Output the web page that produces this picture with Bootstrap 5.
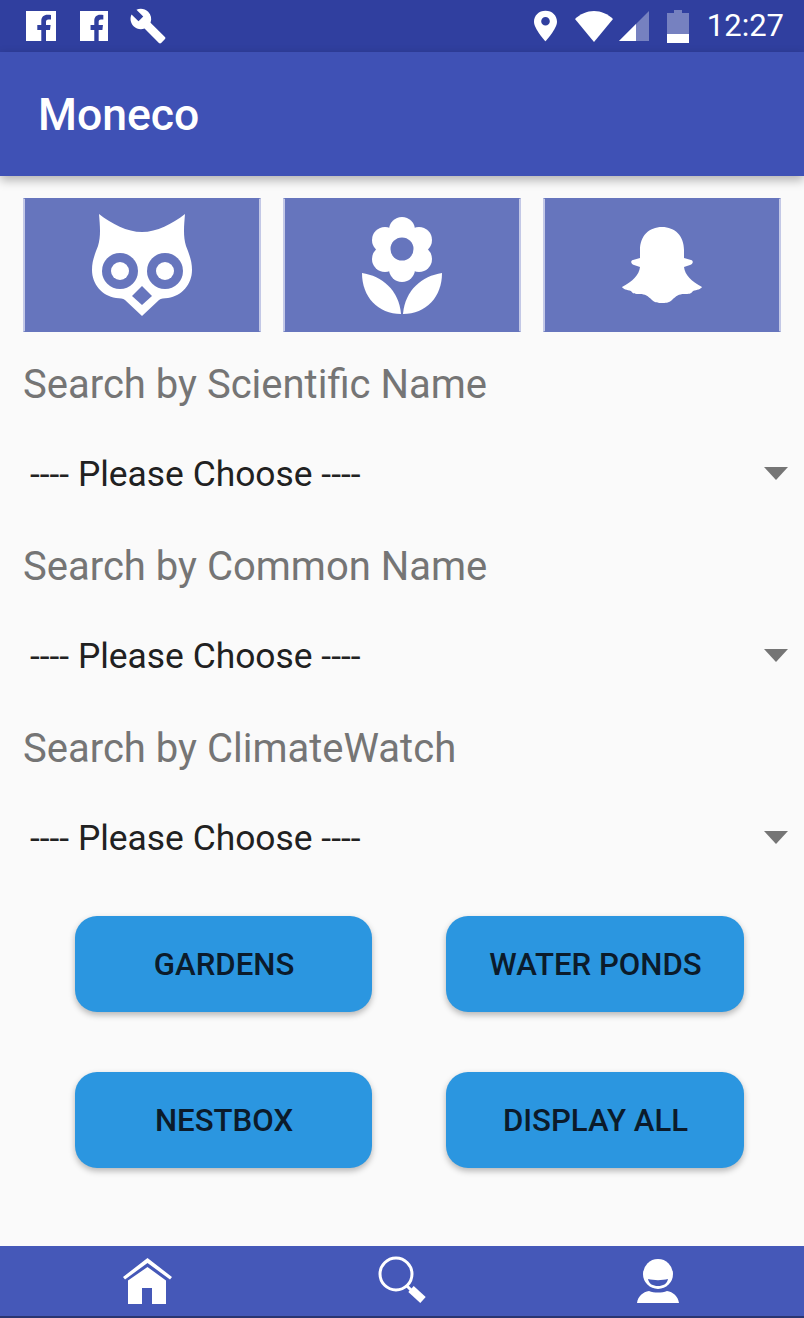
<!DOCTYPE html>
<html lang="en">
<head>
  <meta charset="UTF-8">
  <meta name="viewport" content="width=device-width, initial-scale=1">
  <title>Moneco</title>
  <link href="https://cdn.jsdelivr.net/npm/bootstrap@5.3.2/dist/css/bootstrap.min.css" rel="stylesheet">
  <style>
    html, body { height: 100%; }
    body {
      background: #fafafa;
      font-family: Roboto, "Liberation Sans", sans-serif;
      overflow: hidden;
    }
    .status-strip { height: 52px; background: #303f9f; color: #fff; padding: 0 20px 0 26px; }
    .status-time { font-size: 31px; line-height: 50px; margin-left: 18px; }
    .gap-left-6 { margin-left: 6px; }
    .gap-left-18 { margin-left: 18px; }
    .gap-left-21 { margin-left: 21px; }
    .gap-left-24 { margin-left: 24px; }
    .app-head {
      height: 124px;
      background: #3f51b5;
      padding: 3px 0 0 38px;
      box-shadow: 0 4px 10px rgba(0,0,0,.3);
      position: relative;
    }
    .app-title { color: #fff; font-size: 44.5px; font-weight: 500; margin: 0; line-height: 1; }
    .tile-row { padding: 22px 23px 24px; }
    .tile {
      width: 238px;
      height: 134px;
      background: #6675bd;
      border-left: 2px solid #c3c8e6;
      border-right: 2px solid #c3c8e6;
      border-radius: 0;
    }
    .field-block { margin-bottom: 20px; }
    .field-label { color: #757575; font-size: 40px; line-height: 56px; padding: 1px 0 0 23px; margin: 0 0 15px; display: block; }
    .field-select.form-select {
      height: 90px;
      padding: 3px 0 0 30px;
      border: 0;
      border-radius: 0;
      background-color: transparent;
      background-image: url("data:image/svg+xml,%3Csvg xmlns='http://www.w3.org/2000/svg' width='24' height='13'%3E%3Cpath d='M0 0h24L12 13z' fill='%23757575'/%3E%3C/svg%3E");
      background-position: right 16px center;
      background-size: 24px 13px;
      color: #212121;
      font-size: 35.4px;
      box-shadow: none;
    }
    .btn-grid { padding: 14px 60px 0 75px; display: grid; grid-template-columns: 297px 298px; column-gap: 74px; row-gap: 60px; }
    .btn-grid .btn {
      height: 96px;
      background: #2b96e0;
      border: 0;
      border-radius: 22px;
      color: #0b1b2b;
      font-size: 31.2px;
      font-weight: 500;
      padding: 2px 0 0 1px;
      box-shadow: 0 3px 6px rgba(0,0,0,.28);
    }
    .bottom-bar { height: 72px; background: #4558b8; border-bottom: 2px solid #2a3570; padding-left: 20px; }
    .bottom-slot { width: 255px; }
  </style>
</head>
<body class="d-flex flex-column">
  <!-- status bar -->
  <div class="status-strip d-flex align-items-center justify-content-between">
    <div class="d-flex align-items-center">
      <svg width="30" height="30" viewBox="0 0 30 30"><path fill="#fff" d="M0 0h30v30H20V19h4l.6-5H20v-3c0-1.500.5-2.500 2.500-2.500H25V4c-1-.2-2-.3-3.500-.3-3.700 0-6.200 2.200-6.200 6.300V14h-4v5h4v11H0z"/></svg>
      <svg width="28" height="30" viewBox="0 0 30 30" preserveAspectRatio="none" class="gap-left-24"><path fill="#fff" d="M0 0h30v30H20V19h4l.6-5H20v-3c0-1.500.5-2.500 2.500-2.500H25V4c-1-.2-2-.3-3.500-.3-3.700 0-6.200 2.200-6.200 6.300V14h-4v5h4v11H0z"/></svg>
      <svg width="38" height="38" viewBox="0 0 24 24" class="gap-left-21"><path fill="#fff" d="M22.700 19l-9.100-9.100c.9-2.300.4-5-1.500-6.900-2-2-5-2.400-7.400-1.300L9 6 6 9 1.600 4.700C.4 7.100.9 10.100 2.900 12.100c1.900 1.900 4.600 2.400 6.900 1.500l9.100 9.100c.4.4 1 .4 1.400 0l2.300-2.300c.5-.4.5-1.100.1-1.400z"/></svg>
    </div>
    <div class="d-flex align-items-center">
      <svg width="23" height="32" viewBox="0 0 24 32"><path fill="#fff" fill-rule="evenodd" d="M12 0C5 0 0 5 0 11.500 0 19 12 32 12 32s12-13 12-20.500C24 5 19 0 12 0zm0 15.500a4.500 4.500 0 1 1 0-9 4.500 4.500 0 0 1 0 9z"/></svg>
      <svg width="38" height="31" viewBox="0 0 38 31" class="gap-left-18"><path fill="#fff" d="M0 8C5 3 12 0 19 0s14 3 19 8L19 31z"/></svg>
      <svg width="30" height="30" viewBox="0 0 30 30" class="gap-left-6"><path fill="#7681c0" d="M30 0v30H0z"/><path fill="#fff" d="M17 13v17H0z"/></svg>
      <svg width="22" height="33" viewBox="0 0 22 33" class="gap-left-18"><path fill="#7681c0" d="M7 0h8v3h7v30H0V3h7z"/><path fill="#fff" d="M0 24h22v9H0z"/></svg>
      <span class="status-time">12:27</span>
    </div>
  </div>

  <!-- app bar -->
  <header class="app-head d-flex align-items-center">
    <h1 class="app-title">Moneco</h1>
  </header>

  <main class="flex-grow-1">
    <div class="tile-row d-flex justify-content-between">
      <button class="tile btn d-flex align-items-center justify-content-center p-0" type="button" aria-label="Birds">
        <svg width="100" height="102" viewBox="0 0 100 102">
          <path fill="#fff" d="M7 0C20 10 35 18 50 18S80 10 93 0C92 12 91 22 94 32c4 10 6 16 6 24 0 14-10 26-24 28-4 .5-7 0-9 2L50 102 33 86c-2-2-5-1.500-9-2C10 82 0 70 0 56c0-8 2-14 6-24C9 22 8 12 7 0z"/>
          <circle cx="28" cy="57" r="18" fill="#6675bd"/><circle cx="28" cy="57" r="9" fill="#fff"/>
          <circle cx="73" cy="57" r="18" fill="#6675bd"/><circle cx="73" cy="57" r="9" fill="#fff"/>
          <path fill="#6675bd" d="M50 72l10 10-10 9-10-9z"/>
        </svg>
      </button>
      <button class="tile btn d-flex align-items-center justify-content-center p-0" type="button" aria-label="Plants">
        <svg width="80" height="97" viewBox="0 0 80 97">
          <g fill="#fff">
            <circle cx="40" cy="13" r="13"/><circle cx="40" cy="52" r="13"/>
            <circle cx="23" cy="23" r="13"/><circle cx="57" cy="23" r="13"/>
            <circle cx="23" cy="42" r="13"/><circle cx="57" cy="42" r="13"/>
            <circle cx="40" cy="32" r="22"/>
            <path d="M0 56c20 3 37 17 39 41C16 97 0 80 0 56z"/>
            <path d="M80 56c-20 3-37 17-39 41 23 0 39-17 39-41z"/>
          </g>
          <circle cx="40" cy="32" r="11.500" fill="#6675bd"/>
        </svg>
      </button>
      <button class="tile btn d-flex align-items-center justify-content-center p-0" type="button" aria-label="Animals">
        <svg width="80" height="76" viewBox="0 0 80 76">
          <path fill="#fff" d="M40 0c13 0 22 9 22 23v8l7 2c3 1 2 4-1 5l-6 2c1 8 7 14 18 20-1 2-5 3-9 4-2 3-4 3-9 3-5 0-8 2-12 6-3 3-7 3-10 3s-7 0-10-3c-4-4-7-6-12-6s-7 0-9-3c-4-1-8-2-9-4 11-6 17-12 18-20l-6-2c-3-1-4-4-1-5l7-2v-8C18 9 27 0 40 0z"/>
        </svg>
      </button>
    </div>

    <div class="field-block">
      <label class="field-label" for="sciName">Search by Scientific Name</label>
      <select class="form-select field-select" id="sciName"><option>---- Please Choose ----</option></select>
    </div>
    <div class="field-block">
      <label class="field-label" for="commonName">Search by Common Name</label>
      <select class="form-select field-select" id="commonName"><option>---- Please Choose ----</option></select>
    </div>
    <div class="field-block">
      <label class="field-label" for="climateWatch">Search by ClimateWatch</label>
      <select class="form-select field-select" id="climateWatch"><option>---- Please Choose ----</option></select>
    </div>

    <div class="btn-grid">
      <button class="btn" type="button">GARDENS</button>
      <button class="btn" type="button">WATER PONDS</button>
      <button class="btn" type="button">NESTBOX</button>
      <button class="btn" type="button">DISPLAY ALL</button>
    </div>
  </main>

  <!-- bottom tabs -->
  <nav class="bottom-bar d-flex align-items-center">
    <div class="bottom-slot d-flex justify-content-center">
      <svg width="49" height="46" viewBox="0 0 49 46">
        <path fill="#fff" d="M24.500 0L49 19l-2 2.500L24.500 5 2 21.500 0 19z"/>
        <path fill="#fff" d="M24.500 9L43 22.500V46H29V30H19v16H5V22.500z"/>
      </svg>
    </div>
    <div class="bottom-slot d-flex justify-content-center">
      <svg width="50" height="50" viewBox="0 0 50 50">
        <circle cx="18" cy="18" r="16" fill="none" stroke="#fff" stroke-width="3"/>
        <path stroke="#fff" stroke-width="3" d="M29 30l4 4"/>
        <path stroke="#fff" stroke-width="8" stroke-linecap="butt" d="M33 33l12 11"/>
      </svg>
    </div>
    <div class="bottom-slot d-flex justify-content-center">
      <svg width="42" height="44" viewBox="0 0 42 44">
        <circle cx="21" cy="15" r="15" fill="#fff"/>
        <path fill="#4558b8" d="M11 20c6 1.500 14 1.500 20 0-1 5-5 7-10 7s-9-2-10-7z"/>
        <path fill="#fff" d="M0 44c1-7 6-11 12-12 5 2 13 2 18 0 6 1 11 5 12 12z"/>
      </svg>
    </div>
  </nav>
</body>
</html>
